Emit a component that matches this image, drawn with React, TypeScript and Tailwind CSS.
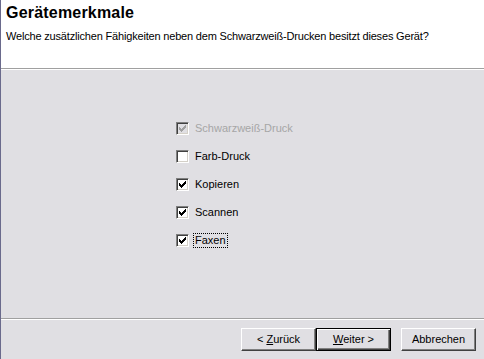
import React from "react";

function Check({ checked, disabled }: { checked: boolean; disabled?: boolean }) {
  return (
    <div
      className={`w-[13px] h-[13px] shrink-0 border border-t-[#808080] border-l-[#808080] border-r-white border-b-white shadow-[inset_1px_1px_0_#404040,inset_-1px_-1px_0_#d4d0c8] ${
        disabled ? "bg-[#e0dfe3]" : "bg-white"
      } flex items-center justify-center`}
    >
      {checked && (
        <svg width="11" height="11" viewBox="0 0 11 11" shapeRendering="crispEdges">
          <path
            d="M2 4h1v3h-1zM3 5h1v3h-1zM4 6h1v3h-1zM5 5h1v3h-1zM6 4h1v3h-1zM7 3h1v3h-1zM8 2h1v3h-1z"
            fill={disabled ? "#a0a0a0" : "#000"}
            transform="translate(-0.5,-0.5)"
          />
        </svg>
      )}
    </div>
  );
}

function Row({
  label,
  checked,
  disabled,
  focus,
}: {
  label: string;
  checked: boolean;
  disabled?: boolean;
  focus?: boolean;
}) {
  return (
    <div className="flex items-center h-[13px]">
      <Check checked={checked} disabled={disabled} />
      <span
        className={`ml-[4px] leading-[13px] ${disabled ? "text-[#a6a6a6]" : "text-black"} ${
          focus ? "border border-dotted border-black" : "border border-transparent"
        } px-[1px]`}
      >
        {label}
      </span>
    </div>
  );
}

function Btn({ children, def }: { children: React.ReactNode; def?: boolean }) {
  return def ? (
    <div className="w-[75px] h-[23px] border border-black bg-[#e0dfe3] shadow-[inset_1px_1px_0_#ffffff,inset_-1px_-1px_0_#404040,inset_-2px_-2px_0_#808080] flex items-center justify-center">
      {children}
    </div>
  ) : (
    <div className="w-[75px] h-[23px] border border-t-white border-l-white border-r-[#404040] border-b-[#404040] bg-[#e0dfe3] shadow-[inset_-1px_-1px_0_#808080] flex items-center justify-center">
      {children}
    </div>
  );
}

export default function App() {
  return (
    <div
      className="w-[484px] h-[359px] flex flex-col border-l border-[#6a6a8c] bg-[#e0dfe3] text-[11px] text-black overflow-hidden"
      style={{ fontFamily: '"Liberation Sans", Arial, sans-serif' }}
    >
      <div className="h-[68px] bg-white pl-[5px] pt-[3px] shrink-0">
        <div className="text-[16px] font-bold leading-[20px] tracking-[0.2px]">Gerätemerkmale</div>
        <div className="mt-[7px] leading-[13px] tracking-[-0.18px]">
          Welche zusätzlichen Fähigkeiten neben dem Schwarzweiß-Drucken besitzt dieses Gerät?
        </div>
      </div>
      <div className="h-px bg-[#a0a0a0] shrink-0" />
      <div className="h-px bg-white shrink-0" />
      <div className="flex-1 pt-[52px] pl-[175px] flex flex-col gap-[15px]">
        <Row label="Schwarzweiß-Druck" checked disabled />
        <Row label="Farb-Druck" checked={false} />
        <Row label="Kopieren" checked />
        <Row label="Scannen" checked />
        <Row label="Faxen" checked focus />
      </div>
      <div className="h-px bg-[#a0a0a0] shrink-0" />
      <div className="h-px bg-white shrink-0" />
      <div className="h-[39px] shrink-0 flex items-start pt-[8px] pr-[8px] justify-end">
        <Btn>
          <span>
            &lt; <span className="underline">Z</span>urück
          </span>
        </Btn>
        <Btn def>
          <span>
            <span className="underline">W</span>eiter &gt;
          </span>
        </Btn>
        <div className="w-[10px]" />
        <Btn>
          <span>Abbrechen</span>
        </Btn>
      </div>
    </div>
  );
}
